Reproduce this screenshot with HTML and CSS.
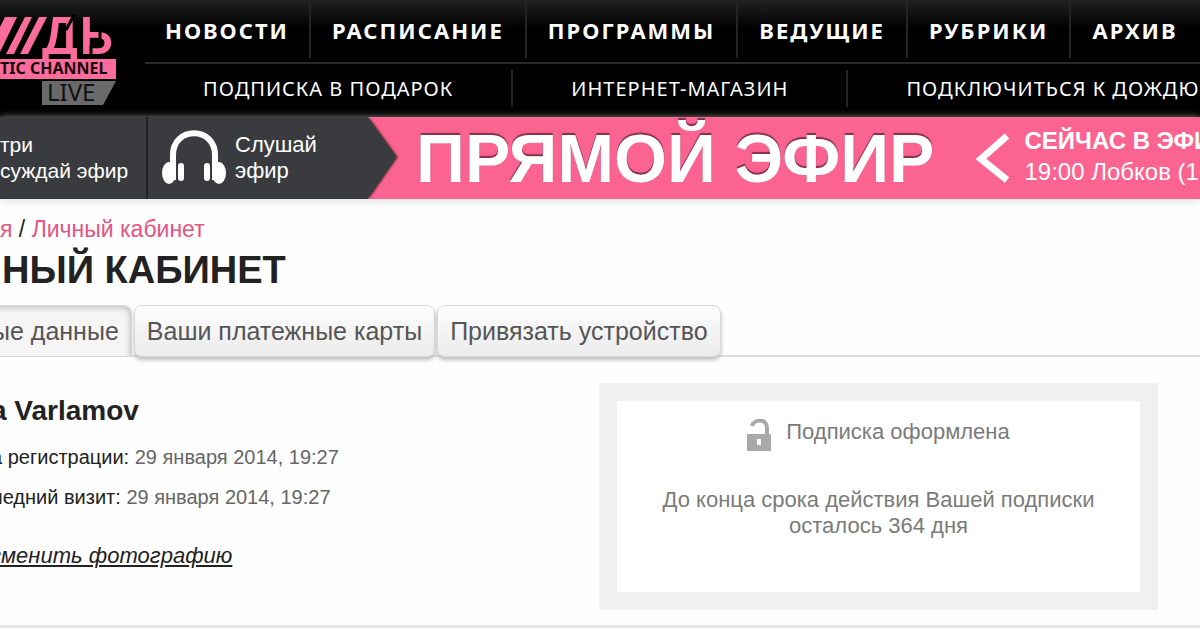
FILE: index.html
```html
<!DOCTYPE html>
<html lang="ru">
<head>
<meta charset="utf-8">
<title>Личный кабинет</title>
<link rel="stylesheet" href="styles.css">
</head>
<body>
<header class="header">
  <a class="logo" href="#">
    <svg width="120" height="108" viewBox="0 0 120 108" role="img" aria-label="Дождь Live">
      <g fill="#fb6c9c" stroke="#fb6c9c">
        <path d="M5 17H17L0 52V27ZM25 17H32L14 54H6ZM39 17H47L28 54H20ZM0 59H116V79H0Z" stroke="none"/>
        <text class="logo-name" x="43" y="53">Д</text>
        <text class="logo-name" x="80" y="53">Ь</text>
      </g>
      <path d="M74 15L66 30M100 29V42M91 46V56" stroke="#000" stroke-width="3"/>
      <text class="logo-sub" x="0" y="74">TIC CHANNEL</text>
      <path d="M42 81H116L103 105H42Z" fill="#686b69"/>
      <text class="logo-live" x="47" y="101">LIVE</text>
    </svg>
  </a>
  <div class="menus">
    <nav class="menu menu-main">
      <a href="#">НОВОСТИ</a>
      <a href="#">РАСПИСАНИЕ</a>
      <a href="#">ПРОГРАММЫ</a>
      <a href="#">ВЕДУЩИЕ</a>
      <a href="#">РУБРИКИ</a>
      <a href="#">АРХИВ</a>
    </nav>
    <nav class="menu menu-sub">
      <a href="#">ПОДПИСКА В ПОДАРОК</a>
      <a href="#">ИНТЕРНЕТ-МАГАЗИН</a>
      <a href="#">ПОДКЛЮЧИТЬСЯ К ДОЖДЮ</a>
    </nav>
  </div>
</header>

<section class="onair">
  <a class="watch" href="#">три<br>суждай эфир</a>
  <a class="listen" href="#">
    <svg width="66" height="56" viewBox="0 0 66 56" aria-hidden="true">
      <path d="M12 36V25C12 -4 54 -4 54 25V36" fill="none" stroke="#fff" stroke-width="6"/>
      <ellipse cx="8" cy="43" rx="7" ry="11" fill="#fff"/>
      <ellipse cx="58" cy="43" rx="7" ry="11" fill="#fff"/>
      <path d="M9 34H15V50H9ZM51 34H57V50H51Z" fill="#fff"/>
      <rect x="17" y="33" width="6" height="18" rx="3" fill="#fff"/>
      <rect x="43" y="33" width="6" height="18" rx="3" fill="#fff"/>
    </svg>
    <span>Слушай<br>эфир</span>
  </a>
  <svg class="arrow" width="30" height="82" viewBox="0 0 30 82" aria-hidden="true">
    <path d="M0 0L29 40L0 82Z" fill="#393b3e"/>
  </svg>
  <strong class="live-title">ПРЯМОЙ ЭФИР</strong>
  <button class="prev" type="button" aria-label="Назад">
    <svg width="34" height="50" viewBox="0 0 34 50" aria-hidden="true">
      <path d="M31 3L5 26L31 47" fill="none" stroke="#fff" stroke-width="7"/>
    </svg>
  </button>
  <div class="now"><strong>СЕЙЧАС В ЭФИРЕ</strong><span>19:00 Лобков (16+)</span></div>
</section>

<main class="page">
  <div class="crumbs"><a href="#">я</a> / <a href="#">Личный кабинет</a></div>
  <h1>НЫЙ КАБИНЕТ</h1>
  <nav class="tabs">
    <a class="tab tab-active" href="#">ые данные</a>
    <a class="tab" href="#">Ваши платежные карты</a>
    <a class="tab" href="#">Привязать устройство</a>
  </nav>
  <div class="account">
    <section class="profile">
      <h2>a Varlamov</h2>
      <p>а регистрации: <time>29 января 2014, 19:27</time></p>
      <p>ледний визит: <time>29 января 2014, 19:27</time></p>
      <a class="photo" href="#">зменить фотографию</a>
    </section>
    <section class="subscription">
      <div class="status">
        <svg width="24" height="32" viewBox="0 0 24 32" aria-hidden="true">
          <path d="M5 7C7 0 20 -1 20 9V17" fill="none" stroke="#a9a9a9" stroke-width="4"/>
          <path d="M0 15H24V32H0ZM10 20V26H14V20Z" fill="#a9a9a9" fill-rule="evenodd"/>
        </svg>
        <span>Подписка оформлена</span>
      </div>
      <p>До конца срока действия Вашей подписки осталось 364 дня</p>
    </section>
  </div>
</main>
</body>
</html>
```

FILE: styles.css
```css
* { box-sizing: border-box; }
body {
  margin: 0;
  overflow-x: hidden;
  background: #fefefe;
  color: #222;
  font-family: "Liberation Sans", Arial, sans-serif;
}
a { color: inherit; text-decoration: none; }
h1, h2, p { margin: 0; }
svg { display: block; flex: none; }

.header {
  display: flex;
  height: 117px;
  overflow: hidden;
  background: linear-gradient(#222, #000 28px);
  color: #fff;
}
.logo { flex: none; width: 145px; }
.logo-name { font: 50px "Liberation Sans", sans-serif; stroke-width: 2px; }
.logo-sub { font: bold 16px "Noto Sans", sans-serif; fill: #160a0e; }
.logo-live { font: 24px "Noto Sans", sans-serif; fill: #111; }
.menus { flex: 1; min-width: 0; }
.menu {
  display: flex;
  font-family: "Noto Sans", sans-serif;
  white-space: nowrap;
}
.menu a { flex: none; }
.menu a + a { border-left: 2px solid #242424; }
.menu-main {
  padding-top: 2px;
  border-bottom: 2px solid #2a2a2a;
  font-size: 22px;
  font-weight: bold;
  letter-spacing: 2px;
}
.menu-main a { padding: 0 21px; line-height: 56px; margin-bottom: 4px; }
.menu-main a:first-child { padding: 0 20px; }
.menu-sub { padding-top: 6px; font-size: 20px; letter-spacing: 1px; }
.menu-sub a { padding: 0 58px; line-height: 37px; }

.onair {
  display: flex;
  align-items: center;
  height: 82px;
  overflow: hidden;
  background: #fb6491;
  color: #fff;
  font-size: 22px;
  line-height: 26px;
  white-space: nowrap;
  box-shadow: 0 2px 8px #ddd;
}
.watch, .listen { display: flex; flex: none; align-items: center; height: 100%; background: #393b3e; }
.watch { width: 148px; border-right: 2px solid #202124; font-size: 21px; }
.listen { width: 220px; padding-left: 13px; gap: 8px; }
.arrow { filter: drop-shadow(1px 0 1px #733); }
.live-title {
  margin-left: 18px;
  font-size: 68px;
  line-height: 82px;
  text-shadow: 0 -2px 1px #84304b;
}
.prev { margin: 0 14px 0 42px; padding: 0; border: 0; background: none; }
.now { padding-bottom: 5px; }
.now strong, .now span { display: block; font-size: 24px; line-height: 31px; }

.page { border-bottom: 3px solid #e5e5e5; }
.crumbs { padding-top: 17px; font-size: 23px; line-height: 26px; }
.crumbs a { color: #e45583; }
h1 { padding-left: 2px; font-size: 38px; line-height: 56px; }
.tabs {
  display: flex;
  margin-top: 7px;
  border-bottom: 2px solid #ddd;
  color: #555;
  font-size: 25px;
  line-height: 50px;
  white-space: nowrap;
}
.tab {
  margin: 0 1px -2px;
  padding: 0 12px;
  border: 1px solid #d8d8d8;
  border-radius: 8px;
  background: linear-gradient(#fdfdfd, #ebebeb);
  box-shadow: 0 3px 4px #bbb;
}
.tab-active {
  margin-left: -8px;
  padding-left: 0;
  border-left: 0;
  border-radius: 0 8px 0 0;
  background: #f5f5f5;
  box-shadow: inset -2px 3px 4px #ccc;
}
.account { display: flex; justify-content: space-between; padding: 26px 42px 15px 0; }
.profile { margin-left: -9px; padding-top: 10px; font-size: 20px; white-space: nowrap; }
h2 { margin-bottom: 8px; font-size: 28px; line-height: 36px; }
.profile p { line-height: 40px; }
time { color: #666; }
.photo { display: inline-block; margin-top: 26px; font-size: 22px; font-style: italic; text-decoration: underline; }
.subscription {
  width: 559px;
  min-height: 227px;
  padding: 18px 40px;
  border: 18px solid #f0f0f0;
  background: #fff;
  color: #7b7b7b;
  font-size: 22px;
  line-height: 26px;
  text-align: center;
}
.status { display: flex; justify-content: center; gap: 15px; margin-bottom: 36px; }
```
